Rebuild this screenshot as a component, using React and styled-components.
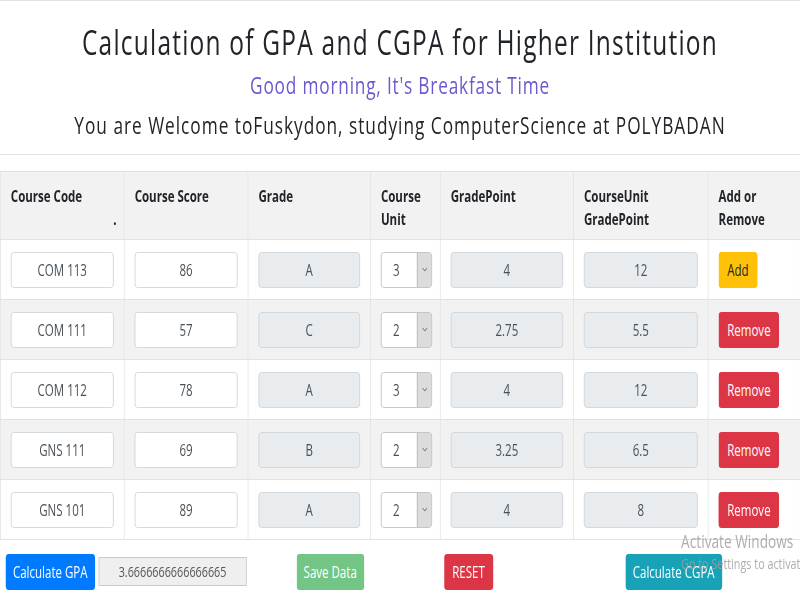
import React from 'react';
import styled, { createGlobalStyle } from 'styled-components';

// the reference is a wide page squeezed horizontally, so we lay it out wide and squeeze it back
const SQUEEZE = 0.72;
const WIDE = 800 / SQUEEZE;

const Global = createGlobalStyle`
    html, body {
        margin:0;
        padding:0;
        overflow:hidden;
        background:#fff;
    }
    body {
        font-family:"Open Sans", "Noto Sans", sans-serif;
        color:#212529;
    }
`

const Page = styled.div`
    position:relative;
    width:${WIDE}px;
    height:600px;
    overflow:hidden;
    transform:scaleX(${SQUEEZE});
    transform-origin:left top;
`

const Header = styled.header`
    border-top:1px solid #e3e3e3;
    border-bottom:1px solid #e3e3e3;
    padding:22px 0 14px;
    text-align:center;
`

const Title = styled.h2`
    margin:0;
    font-size:34px;
    font-weight:400;
    line-height:38px;
    letter-spacing:1.7px;
`

const Greeting = styled.h4`
    margin:10px 0 0;
    font-size:24px;
    font-weight:400;
    line-height:1.2;
    letter-spacing:1.1px;
    color:#6a5acd;
`

const Welcome = styled.h4`
    margin:11px 0 0;
    font-size:24px;
    font-weight:400;
    line-height:1.2;
    letter-spacing:1.35px;
`

const Table = styled.table`
    margin-top:16px;
    width:100%;
    table-layout:fixed;
    border-collapse:collapse;
    border:1px solid #dee2e6;
`

const Th = styled.th`
    text-align:left;
    vertical-align:top;
    font-size:16px;
    font-weight:700;
    line-height:23px;
    padding:13px 14px 8px;
    background:#f2f2f2;
    border:1px solid #dee2e6;
`

const Dot = styled.span`
    display:block;
    text-align:right;
    margin-right:-4px;
`

const Tr = styled.tr`
    background:${p => p.$striped ? '#f2f2f2' : '#fff'};
`

const Td = styled.td`
    padding:12px 14px 11px;
    border:1px solid #dee2e6;
    vertical-align:top;
`

const Field = styled.input`
    box-sizing:border-box;
    display:block;
    width:100%;
    height:36px;
    border:1px solid #ced4da;
    border-radius:4px;
    background:${p => p.disabled ? '#e9ecef' : '#fff'};
    color:#495057;
    font-family:inherit;
    font-size:16px;
    text-align:center;
    padding:0 8px;
    outline:none;
`

const UnitSelect = styled.div`
    box-sizing:border-box;
    display:flex;
    width:71px;
    height:36px;
    border:1px solid #bdbdbd;
    border-radius:4px;
    background:#fff;
    overflow:hidden;
`

const UnitValue = styled.span`
    flex:1;
    padding-left:16px;
    line-height:34px;
    font-size:16px;
    color:#495057;
`

const UnitArrow = styled.span`
    width:19px;
    display:flex;
    align-items:center;
    justify-content:center;
    background:#dcdcdc;
    border-left:1px solid #b0b0b0;
`

const Button = styled.button`
    box-sizing:border-box;
    height:36px;
    padding:0 ${p => p.$pad ?? 12}px;
    border:none;
    border-radius:4px;
    font-family:inherit;
    font-size:16px;
    color:${p => p.$dark ? '#212529' : '#fff'};
    background:${p => p.$bg};
    opacity:${p => p.$faded ? 0.65 : 1};
    margin-left:${p => p.$left || 0}px;
    cursor:pointer;
`

const Footer = styled.div`
    display:flex;
    align-items:center;
    padding:14px 0 0 8px;
`

const Result = styled.div`
    box-sizing:border-box;
    width:206px;
    height:29px;
    margin-left:5px;
    border:1px solid #c9c9c9;
    background:#efefef;
    color:#555;
    font-size:15px;
    line-height:27px;
    text-align:center;
`

const Watermark = styled.div`
    position:absolute;
    left:946px;
    top:530px;
    color:rgba(160,160,160,0.85);
    white-space:nowrap;
    pointer-events:none;
    p {
        margin:0;
        font-size:19px;
        line-height:23px;
    }
    p + p {
        font-size:15px;
        line-height:21px;
    }
`

const rows = [
    { code:'COM 113', score:86, grade:'A', unit:3, gp:'4', cugp:'12' },
    { code:'COM 111', score:57, grade:'C', unit:2, gp:'2.75', cugp:'5.5' },
    { code:'COM 112', score:78, grade:'A', unit:3, gp:'4', cugp:'12' },
    { code:'GNS 111', score:69, grade:'B', unit:2, gp:'3.25', cugp:'6.5' },
    { code:'GNS 101', score:89, grade:'A', unit:2, gp:'4', cugp:'8' },
];

const widths = [172, 172, 170, 97, 185, 187, 128];

function Chevron(){
    return(
        <svg width="8" height="5" viewBox="0 0 8 5">
            <path d="M1 1 L4 4 L7 1" fill="none" stroke="#666" strokeWidth="1" />
        </svg>
    )
}

export default function App(){
    return(
        <Page>
            <Global />
            <Header>
                <Title>Calculation of GPA and CGPA for Higher Institution</Title>
                <Greeting>Good morning, It's Breakfast Time</Greeting>
                <Welcome>You are Welcome toFuskydon, studying ComputerScience at POLYBADAN</Welcome>
            </Header>

            <Table>
                <colgroup>
                    {widths.map((w, i) => <col key={i} style={{ width:w }} />)}
                </colgroup>
                <thead>
                    <tr>
                        <Th>Course Code<Dot>.</Dot></Th>
                        <Th>Course Score</Th>
                        <Th>Grade</Th>
                        <Th>Course Unit</Th>
                        <Th>GradePoint</Th>
                        <Th>CourseUnit GradePoint</Th>
                        <Th>Add or Remove</Th>
                    </tr>
                </thead>
                <tbody>
                    {rows.map((r, i) => (
                        <Tr key={r.code} $striped={i % 2 === 1}>
                            <Td><Field readOnly value={r.code} /></Td>
                            <Td><Field readOnly value={r.score} /></Td>
                            <Td><Field disabled value={r.grade} /></Td>
                            <Td>
                                <UnitSelect>
                                    <UnitValue>{r.unit}</UnitValue>
                                    <UnitArrow><Chevron /></UnitArrow>
                                </UnitSelect>
                            </Td>
                            <Td><Field disabled value={r.gp} /></Td>
                            <Td><Field disabled value={r.cugp} /></Td>
                            <Td>
                                {i === 0
                                    ? <Button $bg="#ffc107" $dark>Add</Button>
                                    : <Button $bg="#dc3545">Remove</Button>}
                            </Td>
                        </Tr>
                    ))}
                </tbody>
            </Table>

            <Footer>
                <Button $bg="#007bff" $pad={10}>Calculate GPA</Button>
                <Result>3.6666666666666665</Result>
                <Button $bg="#28a745" $faded $pad={10} $left={69}>Save Data</Button>
                <Button $bg="#dc3545" $pad={11.5} $left={111}>RESET</Button>
                <Button $bg="#17a2b8" $pad={10} $left={184}>Calculate CGPA</Button>
            </Footer>

            <Watermark>
                <p>Activate Windows</p>
                <p>Go to Settings to activate Windows.</p>
            </Watermark>
        </Page>
    )
}
